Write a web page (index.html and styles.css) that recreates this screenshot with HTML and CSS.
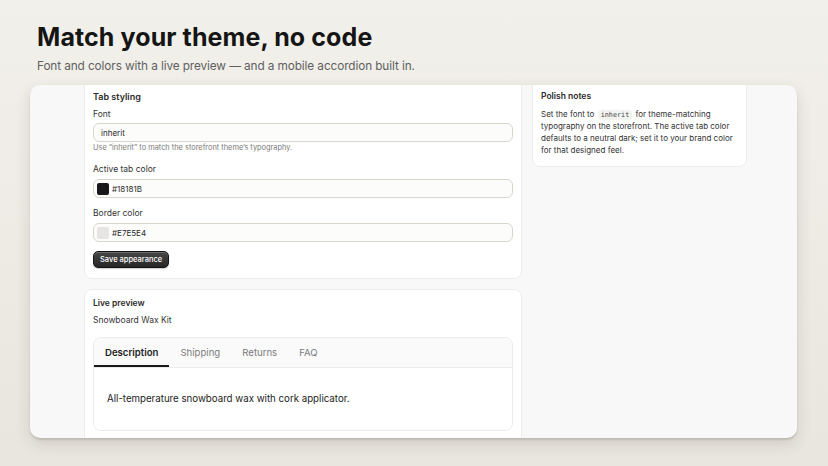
FILE: index.html
```html
<!DOCTYPE html>
<html>
<head>
  <meta charset="utf-8">
  <meta name="viewport" content="width=device-width">
  <title>Match your theme</title>
  <link rel="stylesheet" href="styles.css">
</head>
<body>
<div class="hero">
  <h1>Match your theme, no code</h1>
  <p class="lead">Font and colors with a live preview — and a mobile accordion built in.</p>
</div>

<div class="window">
  <div class="layout">
    <div class="main">
      <div class="card">
        <div class="card-title">Tab styling</div>
        <label class="label">Font</label>
        <div class="input">inherit</div>
        <div class="help">Use “inherit” to match the storefront theme’s typography.</div>

        <label class="label field">Active tab color</label>
        <div class="input"><span class="swatch dark"></span>#18181B</div>

        <label class="label field">Border color</label>
        <div class="input"><span class="swatch light"></span>#E7E5E4</div>

        <div class="button">Save appearance</div>
      </div>

      <div class="card preview">
        <div class="card-title small">Live preview</div>
        <div class="product">Snowboard Wax Kit</div>
        <div class="tabs">
          <div class="tab-bar">
            <div class="tab active">Description</div>
            <div class="tab">Shipping</div>
            <div class="tab">Returns</div>
            <div class="tab">FAQ</div>
          </div>
          <div class="tab-body">All-temperature snowboard wax with cork applicator.</div>
        </div>
      </div>
    </div>

    <div class="side">
      <div class="card notes">
        <div class="card-title small">Polish notes</div>
        <p>Set the font to <code>inherit</code> for theme-matching typography on the storefront. The active tab color defaults to a neutral dark; set it to your brand color for that designed feel.</p>
      </div>
    </div>
  </div>
</div>
</body>
</html>
```

FILE: styles.css
```css
html, body {
  height: 100%;
}
body {
  margin: 0;
  font-family: Inter, "Liberation Sans", sans-serif;
  background: linear-gradient(to bottom, #f2f0ea, #e9e6df);
  color: #1f1f1f;
  overflow: hidden;
}
.hero {
  padding: 22px 37px 0;
}
h1 {
  margin: 0;
  font-size: 25px;
  line-height: 30px;
  font-weight: 700;
  letter-spacing: 0.1px;
  color: #151515;
}
.lead {
  margin: 6px 0 0;
  font-size: 11.8px;
  line-height: 16px;
  color: #5f5f5f;
  letter-spacing: -0.1px;
}
.window {
  margin: 11px 31px 0 30px;
  height: 353px;
  background: #f8f8f8;
  border-radius: 10px;
  overflow: hidden;
  box-shadow: 0 2px 2px rgba(0,0,0,.12), 0 6px 16px rgba(60,50,30,.14);
}
.layout {
  display: flex;
  gap: 10px;
  padding-left: 54px;
  margin-top: -6px;
  align-items: flex-start;
}
.main {
  width: 438px;
  display: flex;
  flex-direction: column;
  gap: 10px;
}
.side {
  width: 215px;
}
.card {
  background: #fff;
  border: 1px solid #efece7;
  border-radius: 8px;
  padding: 10px 8px;
  display: flex;
  flex-direction: column;
}
.card-title {
  font-size: 9px;
  line-height: 14px;
  font-weight: 600;
  color: #2a2a2a;
}
.card-title.small {
  font-size: 8.5px;
  line-height: 12px;
}
.label {
  font-size: 8.5px;
  line-height: 14px;
  color: #333;
  margin-top: 3px;
}
.label.field {
  margin-top: 8px;
}
.input {
  margin-top: 2px;
  height: 17px;
  border: 1px solid #d9d5cc;
  border-radius: 6px;
  background: #fcfcfb;
  display: flex;
  align-items: center;
  gap: 3px;
  padding: 0 7px;
  font-size: 8px;
  color: #2a2a2a;
}
.label.field + .input {
  margin-top: 3px;
}
.swatch {
  width: 12px;
  height: 12px;
  border-radius: 2px;
  margin-left: -4px;
}
.swatch.dark {
  background: #18181b;
}
.swatch.light {
  background: #e7e5e4;
}
.help {
  font-size: 7.4px;
  line-height: 12px;
  color: #7a7a7a;
}
.button {
  margin-top: 9px;
  align-self: flex-start;
  height: 15px;
  line-height: 15px;
  padding: 0 6px;
  font-size: 7.5px;
  font-weight: 500;
  color: #fff;
  border: 1px solid #151515;
  border-radius: 5px;
  background: linear-gradient(to bottom, #474747, #262626);
  box-shadow: inset 0 1px 0 rgba(255,255,255,.2), 0 1px 1px rgba(0,0,0,.2);
}
.preview {
  padding-top: 7px;
  padding-bottom: 20px;
}
.product {
  margin-top: 5px;
  font-size: 8.5px;
  line-height: 12px;
  color: #333;
}
.tabs {
  margin-top: 11px;
  border: 1px solid #ecebe8;
  border-radius: 8px;
  overflow: hidden;
}
.tab-bar {
  display: flex;
  height: 29px;
  background: #fafafa;
  border-bottom: 1px solid #ecebe8;
}
.tab {
  padding: 0 11px;
  font-size: 9.6px;
  line-height: 29px;
  color: #7b7b7b;
}
.tab.active {
  font-weight: 600;
  color: #1c1c1c;
  box-shadow: inset 0 -2px 0 #1a1a1a;
}
.tab-body {
  background: #fff;
  padding: 24px 13px 24px;
  font-size: 9.7px;
  line-height: 14px;
  color: #222;
}
.notes p {
  margin: 6px 0 0;
  font-size: 8px;
  line-height: 12px;
  color: #333;
}
code {
  display: inline-block;
  font-family: "DejaVu Sans Mono", "Liberation Mono", monospace;
  font-size: 6.8px;
  line-height: 10px;
  background: #f3f3f2;
  border-radius: 3px;
  padding: 0 3px;
  margin: 0 1px;
  color: #444;
}
```
